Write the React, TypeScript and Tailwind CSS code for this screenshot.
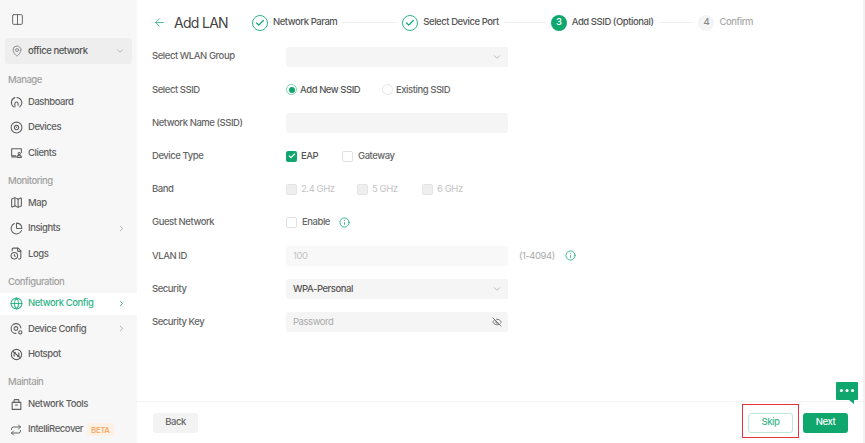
import React from "react";
import { ArrowLeft, Check, ChevronDown, ChevronRight, ChartPie, Columns2, Disc2, EyeOff, FileClock, Globe, Info, Map as MapIcon, MapPin, Repeat } from "lucide-react";

const Ic = ({ children }: { children: React.ReactNode }) => (
  <svg viewBox="0 0 24 24" fill="none" stroke="currentColor" strokeWidth="2" strokeLinecap="round" strokeLinejoin="round" className="w-[13px] h-[13px]">{children}</svg>
);

const Dash = () => <Ic><path d="M7 20a9.5 9.5 0 0 1 2-17" /><path d="M13 3a9.5 9.5 0 0 1 5 17" /><path d="M9 20v-6a3 3 0 0 1 6 0v3" /></Ic>;
const Clients = () => <Ic><path d="M11 18H3V5h18v7" /><path d="M3 20h8" /><circle cx="17" cy="14" r="2" /><path d="M13 21a4 4 0 0 1 8 0z" /></Ic>;
const DevCfg = () => <Ic><path d="M20 11a9 9 0 1 0-9 10" /><circle cx="11" cy="12" r="3.5" /><circle cx="19" cy="19" r="3" /></Ic>;
const Hotspot = () => <Ic><circle cx="12" cy="12" r="9.5" /><path d="M5 6l14 12" /><path d="M8 15a5.5 5.5 0 0 1 2-7" /><path d="M16 9a5.5 5.5 0 0 1-2 7" /></Ic>;
const Tools = () => <Ic><path d="M4 8h16v13H4z" /><path d="M7 8l1-5h8l1 5" /><path d="M10 13h4" /></Ic>;

const Label = ({ t, first }: { t: string; first?: boolean }) => (
  <div className={`${first ? "h-[25.5px]" : "h-[24.5px]"} flex items-end pb-[2px] pl-[8px] text-[9.5px] text-[#a0a0a0]`}>{t}</div>
);

const Item = ({ icon, t, arrow, active, extra }: { icon: React.ReactNode; t: string; arrow?: boolean; active?: boolean; extra?: React.ReactNode }) => (
  <div className="h-[25.4px] flex items-center">
    <div className={`h-[22px] w-full flex items-center pl-[10px] pr-[11px] ${active ? "bg-white text-[#2fb585]" : "text-[#606060]"}`}>
      <span className="w-[18px] flex shrink-0">{icon}</span>
      <span className="text-[9.5px]">{t}</span>
      {extra}
      {arrow && <ChevronRight className={`ml-auto w-[9px] h-[9px] ${active ? "text-[#10a76f]" : "text-[#999]"}`} strokeWidth={2} />}
    </div>
  </div>
);

const Step = ({ label, state, n, lw }: { label: string; state: "done" | "cur" | "todo"; n?: number; lw?: number }) => (
  <>
    {state === "done" && (
      <span className="w-[16px] h-[16px] rounded-full border-[1.5px] border-[#2fb585] flex items-center justify-center shrink-0">
        <Check className="w-[10px] h-[10px] text-[#10a76f]" strokeWidth={3} />
      </span>
    )}
    {state === "cur" && <span className="w-[16px] h-[16px] rounded-full bg-[#10a76f] text-white text-[9.5px] flex items-center justify-center shrink-0">{n}</span>}
    {state === "todo" && <span className="w-[16px] h-[16px] rounded-full bg-[#f4f4f4] text-[#888] text-[9.5px] flex items-center justify-center shrink-0">{n}</span>}
    <span className={`ml-[5px] text-[9.5px] whitespace-nowrap ${state === "todo" ? "text-[#aaa]" : "text-[#555]"}`}>{label}</span>
    {lw ? <span className="h-px bg-[#eeeeee] mx-[5px] shrink-0" style={{ width: lw }} /> : null}
  </>
);

const Row = ({ label, children }: { label: string; children: React.ReactNode }) => (
  <div className="h-[33.2px] flex items-center">
    <div className="w-[134px] text-[9.5px] text-[#666] shrink-0">{label}</div>
    {children}
  </div>
);

const Field = ({ children, right }: { children?: React.ReactNode; right?: React.ReactNode }) => (
  <div className="w-[222px] h-[20px] rounded-[3px] bg-[#f5f5f5] flex items-center justify-between pl-[7px] pr-[6px] text-[9.5px]">
    <span>{children}</span>
    {right}
  </div>
);

const Box = ({ disabled }: { disabled?: boolean }) => (
  <span className={`w-[11px] h-[11px] rounded-[2px] border shrink-0 ${disabled ? "bg-[#eeeeee] border-[#e4e4e4]" : "bg-white border-[#e2e2e2]"}`} />
);

const Chev = () => <ChevronDown className="w-[10px] h-[10px] text-[#999]" strokeWidth={1.5} />;
const Inf = () => <Info className="w-[11px] h-[11px] text-[#2fb585]" strokeWidth={2} />;

export default function App() {
  return (
    <div className="w-[865px] h-[443px] flex bg-white overflow-hidden relative font-medium tracking-[-0.45px]" style={{ fontFamily: "Inter, 'Noto Sans', sans-serif" }}>
      <aside className="w-[137px] h-full bg-[#f7f7f7] shrink-0 flex flex-col">
        <div className="h-[38px] pl-[11px] pt-[13px] text-[#555]">
          <Columns2 className="w-[13px] h-[13px]" strokeWidth={1.6} />
        </div>
        <div className="mx-[5px] h-[26px] rounded-[3px] bg-[#eeeeee] flex items-center pl-[6px] pr-[7px] text-[#555]">
          <MapPin className="w-[12px] h-[12px] text-[#777] mr-[5px]" strokeWidth={1.6} />
          <span className="text-[9.5px]">office network</span>
          <ChevronDown className="ml-auto w-[10px] h-[10px] text-[#999]" strokeWidth={1.5} />
        </div>
        <Label t="Manage" first />
        <Item icon={<Dash />} t="Dashboard" />
        <Item icon={<Disc2 className="w-[13px] h-[13px]" strokeWidth={2} />} t="Devices" />
        <Item icon={<Clients />} t="Clients" />
        <Label t="Monitoring" />
        <Item icon={<MapIcon className="w-[13px] h-[13px]" strokeWidth={2} />} t="Map" />
        <Item icon={<ChartPie className="w-[13px] h-[13px]" strokeWidth={2} />} t="Insights" arrow />
        <Item icon={<FileClock className="w-[13px] h-[13px]" strokeWidth={2} />} t="Logs" />
        <Label t="Configuration" />
        <Item icon={<Globe className="w-[13px] h-[13px]" strokeWidth={2} />} t="Network Config" arrow active />
        <Item icon={<DevCfg />} t="Device Config" arrow />
        <Item icon={<Hotspot />} t="Hotspot" />
        <Label t="Maintain" />
        <Item icon={<Tools />} t="Network Tools" />
        <Item
          icon={<Repeat className="w-[12px] h-[12px]" strokeWidth={2} />}
          t="IntelliRecover"
          extra={<span className="ml-[4px] px-[4px] h-[13px] rounded-[2px] bg-[#fdf1e6] text-[#f5a55a] text-[8px] flex items-center">BETA</span>}
        />
      </aside>

      <main className="flex-1 flex flex-col min-w-0">
        <header className="h-[39px] pl-[16px] pt-[6px] flex items-center">
          <ArrowLeft className="w-[13px] h-[13px] text-[#2fb585] mr-[8px]" strokeWidth={1.6} />
          <span className="text-[14px] font-normal tracking-[-0.7px] text-[#444] w-[78px] shrink-0">Add LAN</span>
          <Step label="Network Param" state="done" lw={55} />
          <Step label="Select Device Port" state="done" lw={42} />
          <Step label="Add SSID (Optional)" state="cur" n={3} lw={35} />
          <Step label="Confirm" state="todo" n={4} />
        </header>
        <section className="flex-1 pl-[15px] pt-[1px] text-[#555]">
          <Row label="Select WLAN Group"><Field right={<Chev />} /></Row>
          <Row label="Select SSID">
            <span className="w-[11px] h-[11px] rounded-full border border-[#7fd0b2] flex items-center justify-center mr-[3px] shrink-0">
              <span className="w-[6px] h-[6px] rounded-full bg-[#10a76f]" />
            </span>
            <span className="text-[9.5px] w-[82px]">Add New SSID</span>
            <span className="w-[11px] h-[11px] rounded-full border border-[#e6e6e6] bg-white mr-[3px] shrink-0" />
            <span className="text-[9.5px] text-[#666]">Existing SSID</span>
          </Row>
          <Row label="Network Name (SSID)"><Field /></Row>
          <Row label="Device Type">
            <span className="w-[11px] h-[11px] rounded-[2px] bg-[#10a76f] flex items-center justify-center shrink-0">
              <Check className="w-[8px] h-[8px] text-white" strokeWidth={3.5} />
            </span>
            <span className="ml-[4px] text-[9.5px] w-[41px]">EAP</span>
            <Box />
            <span className="ml-[5px] text-[9.5px] text-[#666]">Gateway</span>
          </Row>
          <Row label="Band">
            <Box disabled />
            <span className="ml-[4px] text-[9.5px] font-normal text-[#c4c4c4] w-[56px]">2.4 GHz</span>
            <Box disabled />
            <span className="ml-[4px] text-[9.5px] font-normal text-[#c4c4c4] w-[50px]">5 GHz</span>
            <Box disabled />
            <span className="ml-[4px] text-[9.5px] font-normal text-[#c4c4c4]">6 GHz</span>
          </Row>
          <Row label="Guest Network">
            <Box />
            <span className="ml-[5px] text-[9.5px] text-[#666] w-[37px]">Enable</span>
            <Inf />
          </Row>
          <Row label="VLAN ID">
            <div className="w-[222px] h-[20px] rounded-[3px] bg-[#f8f8f8] flex items-center pl-[7px] text-[9.5px] font-normal text-[#c4c4c4]">100</div>
            <span className="ml-[11px] text-[9.5px] font-normal text-[#aaa] w-[40px]">(1-4094)</span>
            <span className="ml-[6px] flex"><Inf /></span>
          </Row>
          <Row label="Security">
            <Field right={<Chev />}><span className="text-[#555]">WPA-Personal</span></Field>
          </Row>
          <Row label="Security Key">
            <Field right={<EyeOff className="w-[10px] h-[10px] text-[#555]" strokeWidth={1.8} />}><span className="font-normal text-[#aaa]">Password</span></Field>
          </Row>
        </section>
        <footer className="h-[42px] border-t border-[#f3f3f3] flex items-center justify-between pl-[16px] pr-[15px] shrink-0">
          <button className="w-[45px] h-[20px] rounded-[3px] bg-[#f3f3f3] text-[9.5px] text-[#666]">Back</button>
          <div className="flex items-center">
            <div className="border-[1.5px] border-[#e8323c] w-[57px] h-[34px] mb-[3px] -ml-px flex items-center justify-center mr-[4px]">
              <button className="w-[45px] h-[20px] mt-[3px] rounded-[3px] border border-[#bfe8d8] bg-white text-[9.5px] text-[#3fb88a]">Skip</button>
            </div>
            <button className="w-[45px] h-[20px] rounded-[3px] bg-[#10a76f] text-[9.5px] text-white">Next</button>
          </div>
        </footer>
      </main>
      <div className="w-[2px] h-full bg-[#f2f2f2] shrink-0" />
      <div className="absolute left-[836px] top-[382px] w-[22px] h-[22px]">
        <svg viewBox="0 0 22 22" className="w-full h-full">
          <path d="M1 0h20a1 1 0 0 1 1 1v16a1 1 0 0 1-1 1h-3v4l-5-4H1a1 1 0 0 1-1-1V1a1 1 0 0 1 1-1z" fill="#10a76f" />
          <circle cx="5.5" cy="8.5" r="1.6" fill="#fff" />
          <circle cx="11" cy="8.5" r="1.6" fill="#fff" />
          <circle cx="16.5" cy="8.5" r="1.6" fill="#fff" />
        </svg>
      </div>
    </div>
  );
}
